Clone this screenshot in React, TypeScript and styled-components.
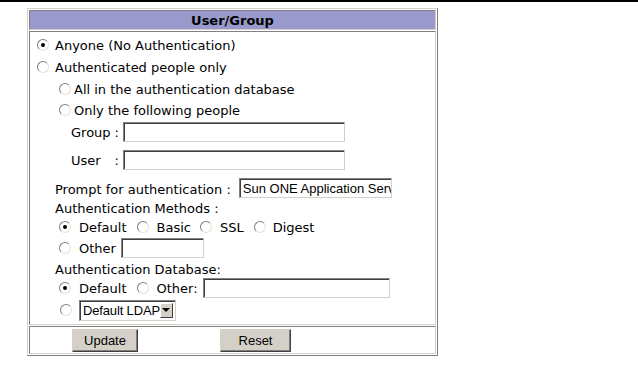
import React from "react";
import styled, { createGlobalStyle } from "styled-components";

const GlobalStyle = createGlobalStyle`
  html, body {
    margin: 0;
    padding: 0;
    background: #fff;
  }
  body {
    font-family: "DejaVu Sans", Verdana, sans-serif;
    font-size: 13px;
    color: #000;
  }
`

const TopRule = styled.div`
  height: 2px;
  background: #000;
  margin-bottom: 6px;
`

const Table = styled.div`
  margin-left: 27px;
  width: 411px;
  box-sizing: border-box;
  border: 1px solid;
  border-color: #d4d0c8 #808080 #808080 #d4d0c8;
  padding: 1px;
  display: flex;
  flex-direction: column;
  gap: 1px;
`

const Cell = styled.div<{ $h: number }>`
  height: ${p => p.$h}px;
  box-sizing: border-box;
  border: 1px solid;
  border-color: #808080 #d4d0c8 #d4d0c8 #808080;
`

const Header = styled(Cell)`
  background: #9999cc;
  font-weight: bold;
  display: flex;
  align-items: center;
  justify-content: center;
  padding-top: 1px;
`

const Body = styled(Cell)`
  padding-top: 2px;
  display: flex;
  flex-direction: column;
`

const Footer = styled(Cell)`
  display: flex;
  align-items: center;
  padding-left: 42px;
  gap: 82px;
`

const Row = styled.div<{ $h: number; $indent: number }>`
  height: ${p => p.$h}px;
  padding-left: ${p => p.$indent}px;
  display: flex;
  align-items: center;
  white-space: nowrap;
`

const RadioDot = styled.span<{ $on?: boolean; $gap: number }>`
  position: relative;
  flex: none;
  width: 12px;
  height: 12px;
  box-sizing: border-box;
  border-radius: 50%;
  border: 1px solid;
  border-color: #808080 #e4e2dc #e4e2dc #808080;
  background: #fff;
  margin-right: ${p => p.$gap}px;

  &::after {
    content: "";
    display: ${p => (p.$on ? "block" : "none")};
    position: absolute;
    left: 3px;
    top: 3px;
    width: 4px;
    height: 4px;
    border-radius: 50%;
    background: #000;
  }
`

const Option = styled.span<{ $after?: number }>`
  display: inline-flex;
  align-items: center;
  margin-right: ${p => p.$after ?? 0}px;
`

const FieldLabel = styled.span`
  display: inline-flex;
  justify-content: space-between;
  width: 48px;
  margin-right: 4px;
`

const Text = styled.span<{ $shift?: number }>`
  padding-top: ${p => p.$shift ?? 0}px;
`

const TextBox = styled.input<{ $w: number; $ml?: number }>`
  width: ${p => p.$w}px;
  height: 20px;
  margin: 0 0 0 ${p => p.$ml ?? 0}px;
  box-sizing: border-box;
  border: 1px solid;
  border-color: #808080 #d4d0c8 #d4d0c8 #808080;
  box-shadow: inset 1px 1px 0 #404040;
  border-radius: 0;
  outline: none;
  background: #fff;
  color: #000;
  font-family: "Liberation Sans", Arial, sans-serif;
  font-size: 13px;
  padding: 0 0 0 3px;
`

const Select = styled.div`
  display: flex;
  width: 97px;
  height: 21px;
  box-sizing: border-box;
  border: 1px solid;
  border-color: #808080 #d4d0c8 #d4d0c8 #808080;
  box-shadow: inset 1px 1px 0 #404040;
  background: #fff;
  font-family: "Liberation Sans", Arial, sans-serif;
  font-size: 13px;
  padding: 2px 2px 2px 3px;
`

const SelectText = styled.span`
  flex: 1;
  line-height: 15px;
  letter-spacing: -0.15px;
  white-space: nowrap;
`

const SelectArrow = styled.span`
  width: 15px;
  box-sizing: border-box;
  background: #d4d0c8;
  border: 1px solid;
  border-color: #fff #404040 #404040 #fff;
  display: flex;
  align-items: center;
  justify-content: center;

  &::after {
    content: "";
    border-left: 4px solid transparent;
    border-right: 4px solid transparent;
    border-top: 4px solid #000;
  }
`

const Button = styled.button<{ $w: number }>`
  width: ${p => p.$w}px;
  height: 23px;
  padding: 0;
  background: #d4d0c8;
  border: 1px solid;
  border-color: #d4d0c8 #404040 #404040 #d4d0c8;
  box-shadow: inset -1px -1px 0 #808080;
  font-family: "Liberation Sans", Arial, sans-serif;
  font-size: 13px;
  color: #000;
`

type RadioProps = { on?: boolean; gap: number; label: string; after?: number };

const Radio: React.FC<RadioProps> = ({ on, gap, label, after }) => (
  <Option $after={after}>
    <RadioDot $on={on} $gap={gap} />
    <span>{label}</span>
  </Option>
)

export default function App() {
  return (
    <>
      <GlobalStyle />
      <TopRule />
      <Table>
        <Header $h={20}>User/Group</Header>
        <Body $h={294}>
          <Row $h={22} $indent={7}>
            <Radio on gap={6} label="Anyone (No Authentication)" />
          </Row>
          <Row $h={22} $indent={7}>
            <Radio gap={6} label="Authenticated people only" />
          </Row>
          <Row $h={22} $indent={29}>
            <Radio gap={3} label="All in the authentication database" />
          </Row>
          <Row $h={20} $indent={29}>
            <Radio gap={3} label="Only the following people" />
          </Row>
          <Row $h={24} $indent={41}>
            <FieldLabel><span>Group</span><span>:</span></FieldLabel>
            <TextBox $w={222} readOnly />
          </Row>
          <Row $h={32} $indent={41}>
            <FieldLabel><span>User</span><span>:</span></FieldLabel>
            <TextBox $w={222} readOnly />
          </Row>
          <Row $h={24} $indent={25}>
            <Text $shift={3}>Prompt for authentication :</Text>
            <TextBox $w={153} $ml={8} readOnly value="Sun ONE Application Server" />
          </Row>
          <Row $h={16} $indent={25}>
            <Text>Authentication Methods :</Text>
          </Row>
          <Row $h={22} $indent={29}>
            <Radio on gap={8} label="Default" after={10} />
            <Radio gap={8} label="Basic" after={9} />
            <Radio gap={8} label="SSL" after={10} />
            <Radio gap={7} label="Digest" />
          </Row>
          <Row $h={20} $indent={29}>
            <Radio gap={8} label="Other" />
            <TextBox $w={83} $ml={5} readOnly />
          </Row>
          <Row $h={20} $indent={25}>
            <Text $shift={2}>Authentication Database:</Text>
          </Row>
          <Row $h={20} $indent={29}>
            <Radio on gap={8} label="Default" after={10} />
            <Radio gap={8} label="Other:" />
            <TextBox $w={187} $ml={5} readOnly />
          </Row>
          <Row $h={24} $indent={30}>
            <RadioDot $gap={7} />
            <Select>
              <SelectText>Default LDAP</SelectText>
              <SelectArrow />
            </Select>
          </Row>
        </Body>
        <Footer $h={28}>
          <Button $w={66}>Update</Button>
          <Button $w={71}>Reset</Button>
        </Footer>
      </Table>
    </>
  )
}
